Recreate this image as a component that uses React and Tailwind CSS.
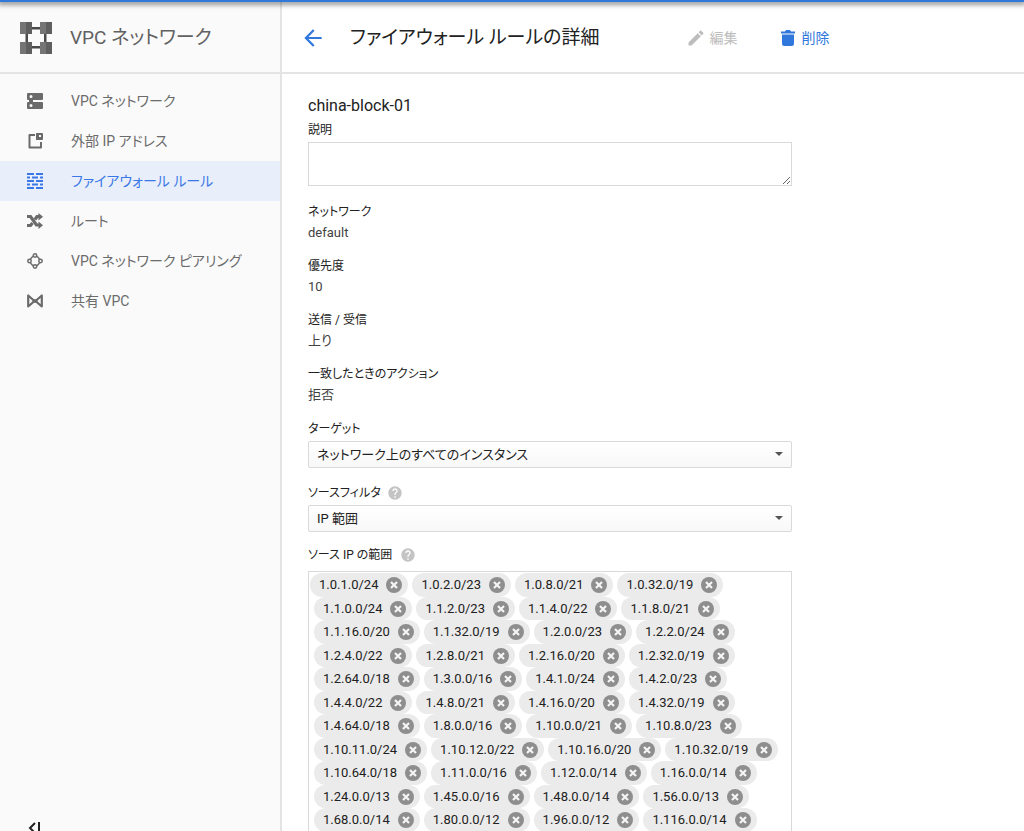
import { useState } from 'react';
import { MdArrowBack, MdEdit, MdHelp } from 'react-icons/md';

const RANGES = [
  '1.0.1.0/24', '1.0.2.0/23', '1.0.8.0/21', '1.0.32.0/19',
  '1.1.0.0/24', '1.1.2.0/23', '1.1.4.0/22', '1.1.8.0/21',
  '1.1.16.0/20', '1.1.32.0/19', '1.2.0.0/23', '1.2.2.0/24',
  '1.2.4.0/22', '1.2.8.0/21', '1.2.16.0/20', '1.2.32.0/19',
  '1.2.64.0/18', '1.3.0.0/16', '1.4.1.0/24', '1.4.2.0/23',
  '1.4.4.0/22', '1.4.8.0/21', '1.4.16.0/20', '1.4.32.0/19',
  '1.4.64.0/18', '1.8.0.0/16', '1.10.0.0/21', '1.10.8.0/23',
  '1.10.11.0/24', '1.10.12.0/22', '1.10.16.0/20', '1.10.32.0/19',
  '1.10.64.0/18', '1.11.0.0/16', '1.12.0.0/14', '1.16.0.0/14',
  '1.24.0.0/13', '1.45.0.0/16', '1.48.0.0/14', '1.56.0.0/13',
  '1.68.0.0/14', '1.80.0.0/12', '1.96.0.0/12', '1.116.0.0/14',
];

const DETAILS = [
  { label: 'ネットワーク', value: 'default' },
  { label: '優先度', value: '10' },
  { label: '送信 / 受信', value: '上り' },
  { label: '一致したときのアクション', value: '拒否' },
];

function Logo() {
  return (
    <svg viewBox="0 0 32 32" className="size-8 shrink-0" aria-hidden="true">
      <path d="M5.500 10h2.500v12H5.500zM24 10h2.500v12H24zM10 5h12v2.500H10zM10 24h12v2.500H10z" fill="#4a4a4a" />
      <path d="M0 0h6v12H0zM20 0h6v12h-6zM0 20h6v12H0zM20 20h6v12h-6z" fill="#757575" />
      <path d="M6 0h6v12H6zM26 0h6v12h-6zM6 20h6v12H6zM26 20h6v12h-6z" fill="#5f5f5f" />
    </svg>
  );
}

function NetworkIcon() {
  return (
    <svg viewBox="0 0 16 16" className="size-4" fill="currentColor" aria-hidden="true">
      <path fillRule="evenodd" d="M1 0h14a1 1 0 0 1 1 1v5a1 1 0 0 1-1 1H6v2h9a1 1 0 0 1 1 1v5a1 1 0 0 1-1 1H1a1 1 0 0 1-1-1v-5a1 1 0 0 1 1-1h1V7H1a1 1 0 0 1-1-1V1a1 1 0 0 1 1-1zm3 2a1.500 1.500 0 1 0 0 3 1.500 1.500 0 0 0 0-3zm0 9a1.500 1.500 0 1 0 0 3 1.500 1.500 0 0 0 0-3z" />
    </svg>
  );
}

function ExternalIpIcon() {
  return (
    <svg viewBox="0 0 16 16" className="size-4" fill="currentColor" aria-hidden="true">
      <path d="M8 1v2H3.500v10.500H13V9h2v5.500a1 1 0 0 1-1 1H2.500a1 1 0 0 1-1-1V2a1 1 0 0 1 1-1z" />
      <path fillRule="evenodd" d="M9.500 0H15a1 1 0 0 1 1 1v5a1 1 0 0 1-1 1H9.500A.5.500 0 0 1 9 6.500v-6A.5.500 0 0 1 9.500 0zM12 2v2h2V2z" />
    </svg>
  );
}

function FirewallIcon() {
  return (
    <svg viewBox="0 0 16 16" className="size-4" fill="currentColor" aria-hidden="true">
      <path d="M0 0h7v2H0zM9 0h7v2H9zM0 3.500h3v2H0zM5 3.500h6v2H5zM13 3.500h3v2h-3zM0 7h7v2H0zM9 7h7v2H9zM0 10.500h3v2H0zM5 10.500h6v2H5zM13 10.500h3v2h-3zM0 14h7v2H0zM9 14h7v2H9z" />
    </svg>
  );
}

function RouteIcon() {
  return (
    <svg viewBox="0 0 16 16" className="size-4" aria-hidden="true">
      <path d="M0 3.500h3.500l6 8.500H12M0 12.500h3.500L5.500 10M8 6.500L10 3.500h2" fill="none" stroke="currentColor" strokeWidth="3.200" />
      <path d="M11.500 0L16 3.700l-4.500 3.700zM11.500 8.500L16 12.200 11.500 16z" fill="currentColor" />
    </svg>
  );
}

function PeeringIcon() {
  return (
    <svg viewBox="0 0 16 16" className="size-4" fill="none" stroke="currentColor" strokeWidth="1.500" aria-hidden="true">
      <circle cx="8" cy="2.500" r="1.700" />
      <circle cx="2.500" cy="8" r="1.700" />
      <circle cx="13.500" cy="8" r="1.700" />
      <circle cx="8" cy="13.500" r="1.700" />
      <path d="M6.400 3.200Q5 4 3.500 6.200M9.600 3.200Q11 4 12.500 6.200M3.500 9.800Q5 12 6.400 12.800M12.500 9.800Q11 12 9.600 12.800" />
    </svg>
  );
}

function SharedIcon() {
  return (
    <svg viewBox="0 0 16 16" className="size-4" fill="none" stroke="currentColor" strokeWidth="2.200" strokeLinejoin="round" aria-hidden="true">
      <path d="M1.200 2.500v11L7.500 8zM14.800 2.500v11L8.500 8z" />
      <path d="M5.500 8h5" strokeWidth="3.500" />
    </svg>
  );
}

function TrashIcon() {
  return (
    <svg viewBox="0 0 14 16" className="h-4 w-3.5" fill="currentColor" aria-hidden="true">
      <path d="M0 1.500h4L5 0h4l1 1.500h4v2H0zM1 4.500h12v9a2.500 2.500 0 0 1-2.500 2.500h-7A2.500 2.500 0 0 1 1 13.500z" />
    </svg>
  );
}

const NAV = [
  { label: 'VPC ネットワーク', icon: NetworkIcon },
  { label: '外部 IP アドレス', icon: ExternalIpIcon },
  { label: 'ファイアウォール ルール', icon: FirewallIcon, active: true },
  { label: 'ルート', icon: RouteIcon },
  { label: 'VPC ネットワーク ピアリング', icon: PeeringIcon },
  { label: '共有 VPC', icon: SharedIcon },
];

function HelpButton({ label }) {
  return (
    <button type="button" aria-label={label} className="text-[#c4c4c4]">
      <MdHelp className="size-4" />
    </button>
  );
}

function Select({ id, option }) {
  return (
    <div className="relative mt-1">
      <select
        id={id}
        className="block h-[27px] w-full appearance-none rounded-xs border border-[#d9d9d9] bg-linear-to-b from-white to-[#f8f8f8] pl-2 pr-8 text-[13px] text-[#212121]"
      >
        <option>{option}</option>
      </select>
      <svg viewBox="0 0 8 4" className="pointer-events-none absolute right-[9px] top-[11px] h-1 w-2" aria-hidden="true">
        <path d="M0 0h8L4 4z" fill="#555" />
      </svg>
    </div>
  );
}

function Chip({ range, onRemove }) {
  return (
    <li className="ml-1 flex h-full items-center rounded-full bg-[#ebebeb] pl-[9px] pr-1.5 text-[13px]">
      {range}
      <button type="button" aria-label={`${range} を削除`} onClick={onRemove} className="ml-2">
        <svg viewBox="0 0 16 16" className="size-4" aria-hidden="true">
          <circle cx="8" cy="8" r="8" fill="#8e8e8e" />
          <path d="M5 5l6 6M11 5l-6 6" stroke="#f5f5f5" strokeWidth="2.200" />
        </svg>
      </button>
    </li>
  );
}

export default function App() {
  const [ranges, setRanges] = useState(RANGES);

  // four chips to a line
  const lines = [];
  for (let i = 0; i < ranges.length; i += 4) lines.push(ranges.slice(i, i + 4));

  return (
    <div className="flex h-screen flex-col overflow-hidden bg-white font-[Roboto,'Noto_Sans_CJK_JP',sans-serif] text-[#212121] [font-feature-settings:'palt']">
      <div className="z-10 h-0.5 shrink-0 bg-[#3078dc] shadow-[0_1px_5px_2px_rgba(0,0,0,0.4)]" />

      <div className="flex min-h-0 flex-1">
        {/* Sidebar */}
        <aside className="flex w-[282px] shrink-0 flex-col border-r-2 border-[#e4e4e4] bg-[#fafafa] text-[#616161]">
          <div className="flex h-[72px] shrink-0 items-center gap-[18px] border-b-2 border-[#e4e4e4] pl-5 pt-0.5">
            <Logo />
            <span className="text-[19px]">VPC ネットワーク</span>
          </div>
          <nav className="flex-1 pt-[7px]">
            {NAV.map(({ label, icon: Icon, active }) => (
              <a
                key={label}
                href="#"
                aria-current={active ? 'page' : undefined}
                className={`flex h-10 items-center gap-7 pl-[27px] text-sm ${
                  active ? 'bg-[#e8effa] text-[#3b78e7]' : 'text-[#6b6b6b]'
                }`}
              >
                <Icon />
                {label}
              </a>
            ))}
          </nav>
          <button type="button" aria-label="メニューを閉じる" className="-mb-1 ml-7 h-3.5 w-3 text-[#212121]">
            <svg viewBox="0 0 12 14" fill="none" stroke="currentColor" strokeWidth="2" aria-hidden="true">
              <path d="M7 2L2 7l5 5M11 1v12" />
            </svg>
          </button>
        </aside>

        <div className="flex min-w-0 flex-1 flex-col">
          {/* Header */}
          <header className="flex h-[72px] shrink-0 items-center border-b-2 border-[#e4e4e4] pl-[18px] pt-0.5">
            <button type="button" aria-label="戻る" className="text-[#3078dc]">
              <MdArrowBack className="size-[26px]" />
            </button>
            <h1 className="ml-6 text-[19px]">ファイアウォール ルールの詳細</h1>
            <button type="button" disabled className="ml-[86px] flex items-center gap-1 text-sm text-[#bdbdbd]">
              <MdEdit className="size-5" />
              編集
            </button>
            <button type="button" className="ml-[43px] flex items-center gap-[7px] text-sm text-[#3078dc]">
              <TrashIcon />
              削除
            </button>
          </header>

          <main className="min-h-0 flex-1 overflow-hidden pl-[26px] pt-5">
            <form className="max-w-[484px]">
              <h2 className="text-base leading-6">china-block-01</h2>
              <label htmlFor="description" className="mt-1 block text-xs leading-4">説明</label>
              <textarea id="description" className="mt-1 block h-11 w-full border border-[#d9d9d9]" />

              <dl className="mt-[18px] flex flex-col gap-[15px]">
                {DETAILS.map(({ label, value }) => (
                  <div key={label}>
                    <dt className="text-xs leading-4">{label}</dt>
                    <dd className="mt-[3px] text-[13px] leading-5 text-[#424242]">{value}</dd>
                  </div>
                ))}
              </dl>

              <label htmlFor="target" className="mt-4 block text-xs leading-4">ターゲット</label>
              <Select id="target" option="ネットワーク上のすべてのインスタンス" />

              <div className="mt-[17px] flex h-4 items-center gap-1.5 text-xs">
                <label htmlFor="filter">ソースフィルタ</label>
                <HelpButton label="ソースフィルタのヘルプ" />
              </div>
              <Select id="filter" option="IP 範囲" />

              <div className="mt-[15px] flex h-4 items-center gap-2 text-xs">
                <span id="ranges">ソース IP の範囲</span>
                <HelpButton label="ソース IP の範囲のヘルプ" />
              </div>
              <div role="group" aria-labelledby="ranges" className="mt-2 border border-[#d9d9d9] pb-6 pt-px">
                {lines.map((line, i) => (
                  <ul key={line[0]} className={`flex ${i % 2 ? 'h-[23px]' : 'h-6'} ${i ? 'pl-px' : '-ml-[3px]'}`}>
                    {line.map((range) => (
                      <Chip key={range} range={range} onRemove={() => setRanges(ranges.filter((r) => r !== range))} />
                    ))}
                  </ul>
                ))}
              </div>
            </form>
          </main>
        </div>
      </div>
    </div>
  );
}
